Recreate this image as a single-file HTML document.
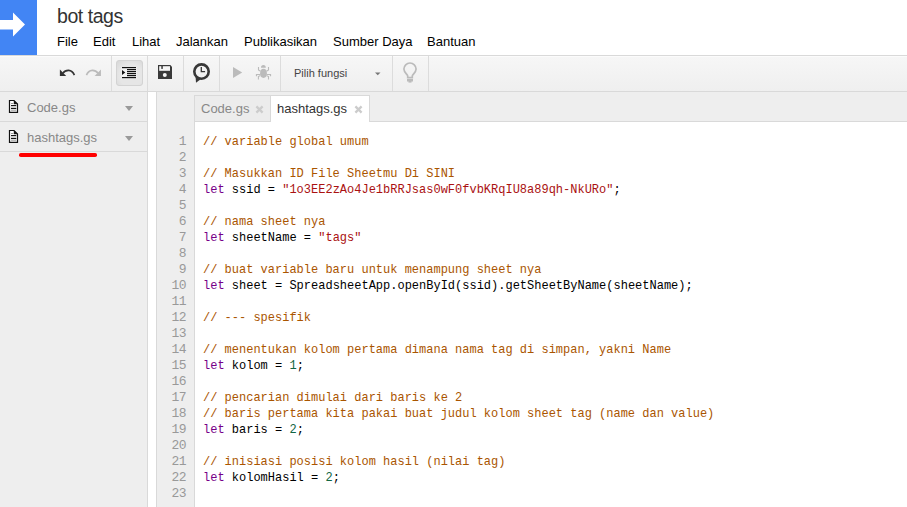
<!DOCTYPE html>
<html><head><meta charset="utf-8">
<style>
*{margin:0;padding:0;box-sizing:border-box}
html,body{width:907px;height:507px;overflow:hidden;background:#fff;font-family:"Liberation Sans",sans-serif}
.abs{position:absolute}
#logo{left:0;top:0;width:37px;height:55px;background:#4285f4}
#title{left:57px;top:5px;font-size:19.5px;letter-spacing:-0.45px;color:#333;white-space:nowrap}
#menu{left:49px;top:33px;font-size:13px;color:#000;white-space:nowrap}
#menu span{position:absolute;top:0}
#hdrline{left:0;top:55px;width:907px;height:1px;background:#d9d9d9}
#toolbar{left:0;top:56px;width:907px;height:35px;background:linear-gradient(#f6f6f6,#efefef);border-top:1px solid #fbfbfb}
#tbline{left:0;top:91px;width:907px;height:1px;background:#d9d9d9}
.sep{position:absolute;top:56px;width:1px;height:35px;background:#dcdcdc}
#sidebar{left:0;top:92px;width:147px;height:415px;background:#eeeeee}
#sbborder{left:147px;top:92px;width:1px;height:415px;background:#d9d9d9}
#strip{left:148px;top:92px;width:8px;height:415px;background:#fff}
#edarea{left:156px;top:92px;width:751px;height:415px;background:#eeeeee;border-left:1px solid #d9d9d9}
.row{position:absolute;left:0;width:147px;height:1px;background:#d9d9d9}
.fname{position:absolute;left:27px;font-size:13px;color:#888}
.tri{position:absolute;left:125px;width:0;height:0;border-left:4px solid transparent;border-right:4px solid transparent;border-top:5px solid #999}
#tabline{left:194px;top:121px;width:713px;height:1px;background:#d9d9d9}
#code{left:195px;top:122px;width:712px;height:385px;background:#fff}
#gutborder{left:194px;top:122px;width:1px;height:385px;background:#d9d9d9}
.tab{position:absolute;top:95px;height:27px;font-size:13px;white-space:nowrap}
#tab1{left:194px;width:77px;background:#ececec;border:1px solid #d9d9d9;color:#888}
#tab2{left:270px;width:100px;background:#fff;border:1px solid #d9d9d9;border-bottom:none;color:#333}
.tab .t{position:absolute;left:6px;top:5px}
.tab .x{position:absolute;top:5px;color:#bbb;font-size:14px}
#lines{left:158px;top:134px;width:37px;font-family:"Liberation Mono",monospace;font-size:13px;letter-spacing:-0.6px;line-height:16px;color:#999;text-align:right;padding-right:9px}
#src{left:203px;top:133.5px;font-family:"Liberation Mono",monospace;font-size:12px;letter-spacing:0;line-height:14.5454px;transform:scaleY(1.1);transform-origin:0 0;color:#000;white-space:pre}
.c{color:#aa5500}.k{color:#770088}.s{color:#aa1111}.n{color:#116644}
#redline{left:19px;top:153.2px;width:77.5px;height:3.5px;background:#f00;border-radius:1.75px}
</style></head><body>
<div class="abs" id="logo"><svg width="37" height="55" viewBox="0 0 37 55"><path d="M0 20h13v-7.5l12 12-12 12V29.5H0z" fill="#fff"/></svg></div>
<div class="abs" id="title">bot tags</div>
<div class="abs" id="menu" style="left:0;top:34px;width:600px;height:16px">
<span style="left:57px">File</span><span style="left:93px">Edit</span><span style="left:132px">Lihat</span><span style="left:176px">Jalankan</span><span style="left:244px">Publikasikan</span><span style="left:333px">Sumber Daya</span><span style="left:427px">Bantuan</span>
</div>
<div class="abs" id="hdrline"></div>
<div class="abs" id="toolbar"></div>
<div class="abs" id="tbline"></div>
<div class="sep" style="left:111px"></div>
<div class="sep" style="left:147px"></div>
<div class="sep" style="left:183px"></div>
<div class="sep" style="left:219px"></div>
<div class="sep" style="left:280px"></div>
<div class="sep" style="left:392px"></div>
<div class="sep" style="left:428px"></div>

<svg class="abs" style="left:0;top:0" width="907" height="92" viewBox="0 0 907 92">
 <!-- undo -->
 <g id="undo"><path d="M59.9 69.6V76H66.2z" fill="#333"/><path d="M62.8 73.2C65.5 69.6 71.8 68.6 74.4 75.1" fill="none" stroke="#333" stroke-width="1.6"/></g>
 <g transform="translate(160.85,0) scale(-1,1)"><path d="M59.9 69.6V76H66.2z" fill="#bbb"/><path d="M62.8 73.2C65.5 69.6 71.8 68.6 74.4 75.1" fill="none" stroke="#bbb" stroke-width="1.6"/></g>
 <!-- indent button -->
 <defs><radialGradient id="ig" cx="0.55" cy="0.6" r="0.75"><stop offset="0.6" stop-color="#e6e6e6"/><stop offset="1" stop-color="#d8d8d8"/></radialGradient></defs>
 <rect x="116.5" y="60.5" width="26" height="25" rx="2.5" fill="url(#ig)" stroke="#d3d3d3"/>
 <rect x="121.5" y="67" width="15" height="11.5" fill="#f4f4f4"/>
 <g fill="#111">
  <rect x="122" y="67" width="14" height="1.2"/>
  <rect x="127" y="69" width="9" height="1.2"/>
  <rect x="127" y="71" width="9" height="1.2"/>
  <rect x="127" y="73" width="9" height="1.2"/>
  <rect x="127" y="75" width="9" height="1.2"/>
  <rect x="122" y="77" width="14" height="1.2"/>
  <path d="M122 70v5l3.3-2.5z"/>
 </g>
 <!-- save -->
 <path d="M158 65h12.3l1.7 1.7V79H158z" fill="#3a3a3a"/>
 <rect x="159.2" y="66.2" width="10.8" height="4.6" fill="#f7f7f7"/>
 <rect x="161.3" y="66" width="1.5" height="2.9" fill="#3a3a3a"/>
 <circle cx="164.8" cy="75" r="2" fill="#f5f5f5"/>
 <!-- clock -->
 <circle cx="201.5" cy="71.6" r="7.2" fill="none" stroke="#383838" stroke-width="2.6"/>
 <path d="M195.5 75.5L196 82.8L201 79z" fill="#383838"/>
 <path d="M201.3 67v4.7h3.8" fill="none" stroke="#383838" stroke-width="1.3"/>
 <!-- play -->
 <path d="M233 67v11l9.2-5.5z" fill="#bbb"/>
 <!-- bug -->
 <g fill="#bbb">
  <path d="M261 67.7a2.4 2.6 0 0 1 4.8 0z"/>
  <ellipse cx="263.5" cy="73.3" rx="3.4" ry="4.6"/>
  <g fill="none" stroke="#bbb" stroke-width="1.1">
   <path d="M258.5 67v3l2 1.2M268.5 67v3l-2 1.2"/>
   <path d="M256.5 76.2v-1.7h4M270.5 76.2v-1.7h-4" stroke-width="1.2"/>
   <path d="M258.4 79.5v-3l2-1M268.5 79.5v-3l-2-1"/>
  </g>
 </g>
 <!-- dropdown arrow -->
 <path d="M375 72.5h5.5l-2.75 2.7z" fill="#777"/>
 <!-- bulb -->
 <g fill="none" stroke="#bbb" stroke-width="1.7">
  <path d="M407.7 77.6v-1.5c0-1.6-3.8-3.6-3.8-7a6.1 6.1 0 0 1 12.2 0c0 3.4-3.8 5.4-3.8 7v1.5z"/>
 </g>
 <rect x="407" y="79" width="6" height="2.5" fill="#bbb"/>
 <rect x="408.5" y="81" width="3" height="1.6" fill="#bbb"/>
</svg>
<div class="abs" style="left:294px;top:67px;font-size:11px;color:#444;white-space:nowrap">Pilih fungsi</div>
<div class="abs" id="sidebar">
  <div class="row" style="top:29px"></div>
  <div class="row" style="top:59px"></div>
  <div class="fname" style="top:8px">Code.gs</div>
  <div class="fname" style="top:38px">hashtags.gs</div>
  <div class="tri" style="top:14px"></div>
  <div class="tri" style="top:44px"></div>
</div>
<div class="abs" id="sbborder"></div>
<div class="abs" id="strip"></div>
<div class="abs" id="edarea"></div>
<div class="abs" id="tabline"></div>
<div class="tab" id="tab1"><span class="t">Code.gs</span></div>
<div class="tab" id="tab2"><span class="t">hashtags.gs</span></div>
<div class="abs" id="code"></div>
<div class="abs" id="gutborder"></div>
<div class="abs" id="lines">1<br>2<br>3<br>4<br>5<br>6<br>7<br>8<br>9<br>10<br>11<br>12<br>13<br>14<br>15<br>16<br>17<br>18<br>19<br>20<br>21<br>22<br>23</div>
<div class="abs" id="src"><span class="c">// variable global umum</span>

<span class="c">// Masukkan ID File Sheetmu Di SINI</span>
<span class="k">let</span> ssid = <span class="s">"1o3EE2zAo4Je1bRRJsas0wF0fvbKRqIU8a89qh-NkURo"</span>;

<span class="c">// nama sheet nya</span>
<span class="k">let</span> sheetName = <span class="s">"tags"</span>

<span class="c">// buat variable baru untuk menampung sheet nya</span>
<span class="k">let</span> sheet = SpreadsheetApp.openById(ssid).getSheetByName(sheetName);

<span class="c">// --- spesifik</span>

<span class="c">// menentukan kolom pertama dimana nama tag di simpan, yakni Name</span>
<span class="k">let</span> kolom = <span class="n">1</span>;

<span class="c">// pencarian dimulai dari baris ke 2</span>
<span class="c">// baris pertama kita pakai buat judul kolom sheet tag (name dan value)</span>
<span class="k">let</span> baris = <span class="n">2</span>;

<span class="c">// inisiasi posisi kolom hasil (nilai tag)</span>
<span class="k">let</span> kolomHasil = <span class="n">2</span>;
</div>
<svg class="abs" style="left:8px;top:99px" width="11" height="15" viewBox="0 0 11 15">
<path d="M1.5 1.5H6L9.5 5V13.3H1.5z" fill="#fff" stroke="#111" stroke-width="1.2"/>
<path d="M5.8 1.2L9.8 5.2H5.8z" fill="#111"/>
<rect x="3" y="4" width="2.5" height="1" fill="#999"/>
<rect x="3" y="6" width="5.3" height="1.1" fill="#111"/>
<rect x="3" y="7.6" width="5.3" height="1" fill="#aaa"/>
<rect x="3" y="9" width="5.3" height="1.1" fill="#111"/>
<rect x="3" y="10.8" width="5.3" height="1" fill="#aaa"/>
</svg>
<svg class="abs" style="left:8px;top:129px" width="11" height="15" viewBox="0 0 11 15">
<path d="M1.5 1.5H6L9.5 5V13.3H1.5z" fill="#fff" stroke="#111" stroke-width="1.2"/>
<path d="M5.8 1.2L9.8 5.2H5.8z" fill="#111"/>
<rect x="3" y="4" width="2.5" height="1" fill="#999"/>
<rect x="3" y="6" width="5.3" height="1.1" fill="#111"/>
<rect x="3" y="7.6" width="5.3" height="1" fill="#aaa"/>
<rect x="3" y="9" width="5.3" height="1.1" fill="#111"/>
<rect x="3" y="10.8" width="5.3" height="1" fill="#aaa"/>
</svg>
<svg class="abs" style="left:254.5px;top:105px" width="9" height="9" viewBox="0 0 9 9"><path d="M1.4 1.4L7.6 7.6M7.6 1.4L1.4 7.6" stroke="#cccccc" stroke-width="2.3"/></svg>
<svg class="abs" style="left:353.5px;top:105px" width="9" height="9" viewBox="0 0 9 9"><path d="M1.4 1.4L7.6 7.6M7.6 1.4L1.4 7.6" stroke="#cccccc" stroke-width="2.3"/></svg>
<div class="abs" id="redline"></div>
</body></html>
